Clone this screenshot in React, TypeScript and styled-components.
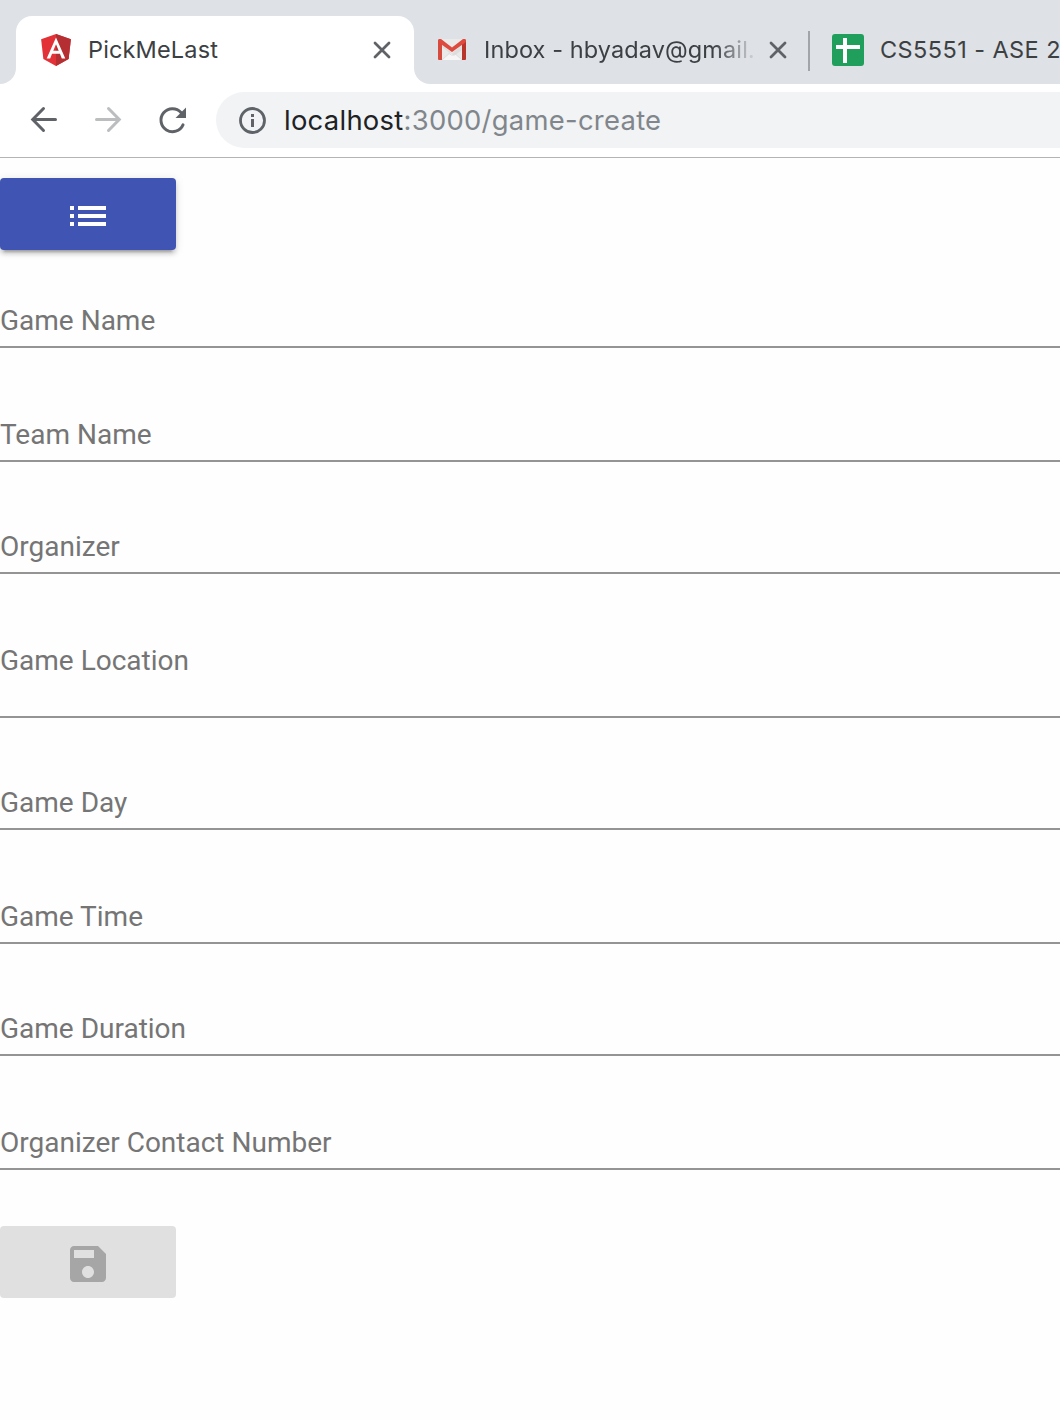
import React from "react";
import styled, { createGlobalStyle } from "styled-components";

const GlobalStyle = createGlobalStyle`
  * { box-sizing: border-box; }
  body { margin: 0; background: #fefefe; overflow: hidden; }
`;

const Window = styled.div`
  width: 100%;
  height: 1420px;
  overflow: hidden;
  background: #fefefe;
`;

const TabStrip = styled.div`
  display: flex;
  height: 84px;
  background: #ffffff;
`;

const StripStart = styled.div`
  flex: none;
  width: 16px;
  background: #dee1e6;
  border-bottom-right-radius: 16px;
`;

const ActiveSlot = styled.div`
  flex: none;
  width: 398px;
  padding-top: 16px;
  background: linear-gradient(#dee1e6 0 40px, #ffffff 40px);
`;

const ActiveTab = styled.div`
  display: flex;
  align-items: center;
  height: 68px;
  padding-left: 25px;
  padding-right: 22px;
  background: #ffffff;
  border-radius: 16px 16px 0 0;
`;

const StripRest = styled.div`
  display: flex;
  align-items: center;
  flex: 1;
  min-width: 0;
  overflow: hidden;
  padding: 16px 0 0 24px;
  background: #dee1e6;
  border-bottom-left-radius: 16px;
`;

const Icon = styled.svg`
  display: block;
  flex: none;
`;

const TabTitle = styled.span<{ $gap: number; $width: number; $spacing: number; $fade?: boolean }>`
  flex: none;
  width: ${(p) => p.$width}px;
  margin-left: ${(p) => p.$gap}px;
  white-space: nowrap;
  font: 400 23.5px/32px Inter, "Liberation Sans", sans-serif;
  letter-spacing: ${(p) => p.$spacing}px;
  color: #3c4043;
  ${(p) => p.$fade && "mask-image: linear-gradient(to right, #000 230px, transparent 274px);"}
`;

const Spacer = styled.div`
  flex: 1;
`;

const TabGap = styled.div`
  flex: none;
  width: 10px;
`;

const CloseButton = styled.button`
  flex: none;
  width: 20px;
  height: 20px;
  padding: 0;
  border: 0;
  background: none;
`;

const Separator = styled.div`
  flex: none;
  width: 2px;
  height: 40px;
  margin: 2px 22px 0 20px;
  background: #a1a4a9;
`;

const Toolbar = styled.div`
  display: flex;
  align-items: center;
  height: 74px;
  padding: 0 0 1px 24px;
  background: #ffffff;
  border-bottom: 1px solid #b2b4b6;
`;

const NavButton = styled.button`
  flex: none;
  width: 40px;
  height: 40px;
  margin-right: 24px;
  padding: 0;
  border: 0;
  background: none;
`;

const AddressBar = styled.div`
  display: flex;
  align-items: center;
  flex: 1;
  height: 56px;
  padding-left: 22px;
  background: #f1f3f4;
  border-radius: 28px 0 0 28px;
`;

const Url = styled.span`
  margin-left: 17px;
  font: 400 27.4px/36px Inter, "Liberation Sans", sans-serif;
  letter-spacing: 0.28px;
  color: #80868b;
  white-space: nowrap;
`;

const Host = styled.span`
  color: #202124;
`;

const Page = styled.main`
  padding-top: 20px;
`;

const RaisedButton = styled.button<{ $off?: boolean }>`
  display: flex;
  align-items: center;
  justify-content: center;
  width: 176px;
  height: 72px;
  padding: 4px 0 0;
  border: 0;
  border-radius: 4px;
  background: ${(p) => (p.$off ? "#e0e0e0" : "#3f54b3")};
  color: ${(p) => (p.$off ? "#a6a6a6" : "#ffffff")};
  box-shadow: ${(p) =>
    p.$off
      ? "none"
      : "0 6px 2px -4px rgba(0,0,0,.2), 0 4px 4px 0 rgba(0,0,0,.14), 0 2px 10px 0 rgba(0,0,0,.12)"};
`;

const Form = styled.form`
  margin-bottom: 56px;
`;

const Field = styled.div<{ $height: number; $below: number }>`
  display: flex;
  flex-direction: column;
  justify-content: flex-end;
  height: ${(p) => p.$height}px;
  padding-bottom: ${(p) => p.$below}px;
  border-bottom: 2px solid #949494;
`;

const Label = styled.label`
  font: 400 28px/32px Roboto, "Liberation Sans", sans-serif;
  color: #757575;
  white-space: nowrap;
`;

const fields = [
  { label: "Game Name", height: 98 },
  { label: "Team Name", height: 114 },
  { label: "Organizer", height: 112 },
  { label: "Game Location", height: 144, below: 39 },
  { label: "Game Day", height: 112 },
  { label: "Game Time", height: 114 },
  { label: "Game Duration", height: 112 },
  { label: "Organizer Contact Number", height: 114 },
];

const Close = () => (
  <CloseButton aria-label="Close tab">
    <Icon width="20" height="20" viewBox="0 0 20 20">
      <path d="M3 3l14 14M17 3L3 17" stroke="#5f6368" strokeWidth="2.8" strokeLinecap="round" />
    </Icon>
  </CloseButton>
);

const AngularIcon = () => (
  <Icon width="30" height="32" viewBox="31.5 30 187 200">
    <path d="M125 30L31.9 63.2l14.2 123.1L125 230l78.9-43.7 14.2-123.1z" fill="#e23237" />
    <path d="M125 30v200l78.9-43.7 14.2-123.1z" fill="#b52e31" />
    <path
      d="M125 52.1L66.8 182.6h21.7l11.7-29.2h49.4l11.7 29.2H183L125 52.1zm17 83.3h-34l17-40.9z"
      fill="#fff"
    />
  </Icon>
);

const GmailIcon = () => (
  <Icon width="28" height="22" viewBox="0 0 28 22">
    <path d="M2 0h24v21H2z" fill="#eaeaea" />
    <path d="M4 21l10-8 10 8z" fill="#f6f6f6" />
    <path d="M4 21l7-6.500 3 2 3-2 7 6.500" fill="none" stroke="#d9d9d9" strokeWidth=".7" />
    <path d="M4 6l10 8 10-8v5l-8 6-12-9z" fill="#d5d5d5" opacity=".6" />
    <path d="M0 2q0-2 2-2l2 1v20H1q-1 0-1-1z" fill="#d54b3d" />
    <path d="M24 1l2-1q2 0 2 2v18q0 1-1 1h-3z" fill="#b8352c" />
    <path d="M0 2Q0 0 2 0q1 0 2 .7L14 8.400 24 .7Q25 0 26 0q2 0 2 2 0 1-1 1.800L14 13 1 3.800Q0 3 0 2z" fill="#de4b3e" />
  </Icon>
);

const SheetIcon = () => (
  <Icon width="32" height="32" viewBox="0 0 32 32">
    <rect width="32" height="32" rx="3" fill="#1f9f5b" />
    <path d="M11 4h4v7h13v4H15v14h-4V15H4v-4h7z" fill="#fff" />
  </Icon>
);

const App = () => (
  <Window>
    <GlobalStyle />
    <TabStrip>
      <StripStart />
      <ActiveSlot>
        <ActiveTab>
          <AngularIcon />
          <TabTitle $gap={17} $width={240} $spacing={0.15}>PickMeLast</TabTitle>
          <Spacer />
          <Close />
        </ActiveTab>
      </ActiveSlot>
      <StripRest>
        <GmailIcon />
        <TabTitle $gap={18} $width={274} $spacing={0.1} $fade>Inbox - hbyadav@gmail.</TabTitle>
        <TabGap />
        <Close />
        <Separator />
        <SheetIcon />
        <TabTitle $gap={16} $width={180} $spacing={0.42}>CS5551 - ASE 2</TabTitle>
      </StripRest>
    </TabStrip>
    <Toolbar>
      <NavButton aria-label="Back">
        <Icon width="40" height="40" viewBox="0 0 40 40">
          <path d="M31.500 19.500H9M19.500 8.500L8.700 19.500l10.800 11" fill="none" stroke="#5f6368" strokeWidth="3" strokeLinecap="round" />
        </Icon>
      </NavButton>
      <NavButton aria-label="Forward">
        <Icon width="40" height="40" viewBox="0 0 40 40">
          <path d="M8.500 19.500H31M20.500 8.500l10.800 11-10.800 11" fill="none" stroke="#bbbdbf" strokeWidth="3" strokeLinecap="round" />
        </Icon>
      </NavButton>
      <NavButton aria-label="Reload">
        <Icon width="40" height="40" viewBox="0 0 40 40">
          <path d="M31 24.800A11.500 11.500 0 1 1 29 12.400" fill="none" stroke="#5f6368" strokeWidth="3" strokeLinecap="round" />
          <path d="M34 7.500V18H23.500z" fill="#5f6368" />
        </Icon>
      </NavButton>
      <AddressBar>
        <Icon width="29" height="29" viewBox="0 0 29 29">
          <circle cx="14.500" cy="14.500" r="12" fill="none" stroke="#5f6368" strokeWidth="2.800" />
          <path d="M13 8h3v3h-3zM13 13h3v8h-3z" fill="#5f6368" />
        </Icon>
        <Url>
          <Host>localhost</Host>:3000/game-create
        </Url>
      </AddressBar>
    </Toolbar>
    <Page>
      <RaisedButton aria-label="List">
        <Icon width="48" height="48" viewBox="0 0 24 24" fill="currentColor">
          <path d="M3 13h2v-2H3v2zm0 4h2v-2H3v2zm0-8h2V7H3v2zm4 4h14v-2H7v2zm0 4h14v-2H7v2zM7 7v2h14V7H7z" />
        </Icon>
      </RaisedButton>
      <Form>
        {fields.map((f) => (
          <Field key={f.label} $height={f.height} $below={f.below ?? 9}>
            <Label>{f.label}</Label>
          </Field>
        ))}
      </Form>
      <RaisedButton $off disabled aria-label="Save">
        <Icon width="48" height="48" viewBox="0 0 24 24" fill="currentColor">
          <path d="M17 3H5c-1.110 0-2 .9-2 2v14c0 1.100.89 2 2 2h14c1.100 0 2-.9 2-2V7l-4-4zm-5 16c-1.660 0-3-1.340-3-3s1.340-3 3-3 3 1.340 3 3-1.340 3-3 3zm3-10H5V5h10v4z" />
        </Icon>
      </RaisedButton>
    </Page>
  </Window>
);

export default App;
